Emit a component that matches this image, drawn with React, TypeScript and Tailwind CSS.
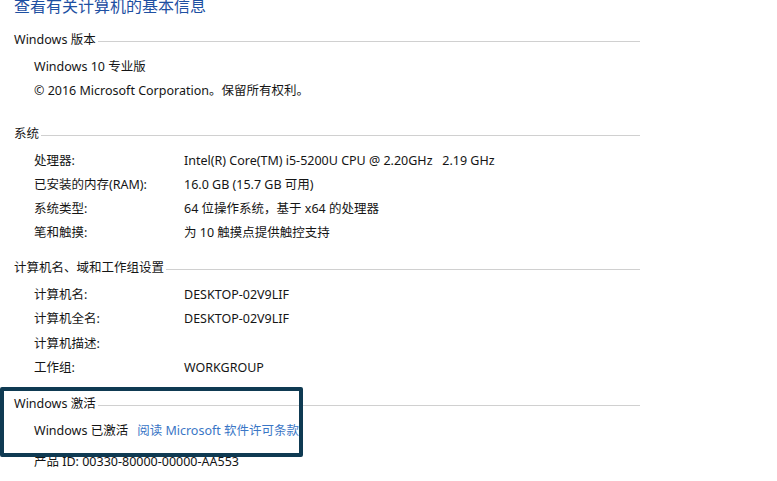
import React from "react";

const font = { fontFamily: '"Noto Sans", "Noto Sans CJK SC", sans-serif' };

function SectionHeader({ title, className }: { title: string; className?: string }) {
  return (
    <div className={`flex h-[24px] items-center pr-[137px] ${className ?? ""}`}>
      <span className="whitespace-nowrap text-[12.5px] text-[#151515]">{title}</span>
      <div className="ml-[2px] mt-[3px] h-px flex-1 bg-[#d0d0d0]" />
    </div>
  );
}

function Row({ label, value, className }: { label: string; value?: string; className?: string }) {
  return (
    <div className={`flex h-[24px] items-center pl-[20px] text-[12.5px] text-[#151515] ${className ?? ""}`}>
      <span className="w-[150px] whitespace-nowrap">{label}</span>
      {value && <span className="whitespace-pre">{value}</span>}
    </div>
  );
}

export default function App() {
  return (
    <div className="relative h-[481px] w-[777px] overflow-hidden bg-white" style={font}>
      <div className="flex flex-col pl-[14px]">
        <div className="mt-[-6px] flex h-[24px] items-center text-[16px] text-[#1e50a2]">
          查看有关计算机的基本信息
        </div>

        <SectionHeader title="Windows 版本" className="mt-[10px]" />
        <div className="mt-[3px] flex h-[24px] items-center pl-[20px] text-[12.5px] text-[#151515]">
          Windows 10 专业版
        </div>
        <div className="flex h-[24px] items-center pl-[20px] text-[12.5px] text-[#151515]">
          © 2016 Microsoft Corporation。保留所有权利。
        </div>

        <SectionHeader title="系统" className="mt-[19px]" />
        <Row className="mt-[3px]" label="处理器:" value="Intel(R) Core(TM) i5-5200U CPU @ 2.20GHz   2.19 GHz" />
        <Row label="已安装的内存(RAM):" value="16.0 GB (15.7 GB 可用)" />
        <Row label="系统类型:" value="64 位操作系统，基于 x64 的处理器" />
        <Row label="笔和触摸:" value="为 10 触摸点提供触控支持" />

        <SectionHeader title="计算机名、域和工作组设置" className="mt-[11px]" />
        <Row className="mt-[3px] !h-[24.5px]" label="计算机名:" value="DESKTOP-02V9LIF" />
        <Row className="!h-[24.5px]" label="计算机全名:" value="DESKTOP-02V9LIF" />
        <Row className="!h-[24.5px]" label="计算机描述:" />
        <Row className="!h-[24.5px]" label="工作组:" value="WORKGROUP" />

        <SectionHeader title="Windows 激活" className="mt-[11px]" />
        <div className="mt-[3px] flex h-[24px] items-center pl-[20px] text-[12.5px]">
          <span className="text-[#151515]">Windows 已激活</span>
          <span className="ml-[9px] text-[#3a76c6]">阅读 Microsoft 软件许可条款</span>
        </div>
        <div className="mt-[7px] flex h-[24px] items-center pl-[20px] text-[12.5px] text-[#151515]">
          产品 ID: 00330-80000-00000-AA553
        </div>
      </div>

      {/* highlight box drawn over the activation section */}
      <div className="absolute left-0 top-[387px] h-[70px] w-[303px] rounded-[2px] border-[4px] border-[#0f3a52]" />
    </div>
  );
}
